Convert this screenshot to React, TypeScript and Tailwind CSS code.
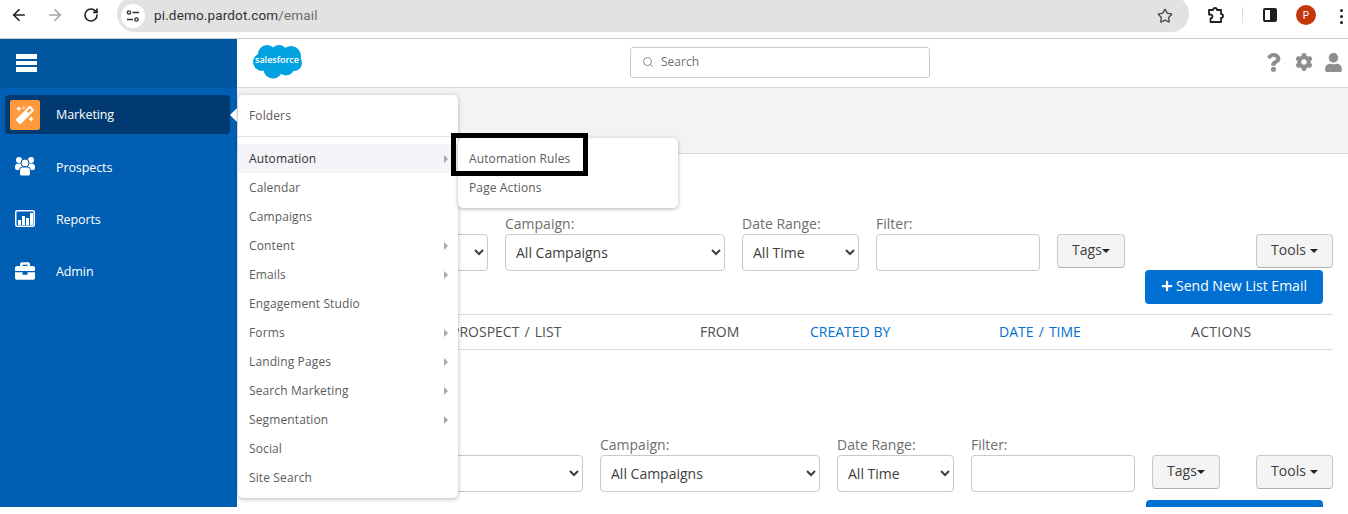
import { ArrowLeft, ArrowRight, RotateCw, Star, Search } from 'lucide-react';
import { FaMagic, FaBriefcase, FaCog, FaUser, FaQuestion, FaPlus } from 'react-icons/fa';

const sans = 'font-["Open_Sans",sans-serif]';

function ReportsIcon() {
  return (
    <svg width="20" height="17" viewBox="0 0 20 17">
      <rect x="0.75" y="0.75" width="18.5" height="15.5" rx="1.5" fill="none" stroke="white" strokeWidth="1.5" />
      <rect x="3" y="10" width="3" height="5" fill="white" />
      <rect x="7" y="6" width="3" height="9" fill="white" />
      <rect x="11" y="8" width="3" height="7" fill="white" />
      <rect x="15" y="3" width="3" height="12" fill="white" />
    </svg>
  );
}

function ProspectsIcon() {
  return (
    <svg width="20" height="19" viewBox="0 0 20 19" fill="white">
      <circle cx="4" cy="3" r="3" />
      <circle cx="16" cy="3" r="3" />
      <path d="M0 9a3 3 0 0 1 3-2.500h14a3 3 0 0 1 3 2.500v2a2 2 0 0 1-2 2H2a2 2 0 0 1-2-2z" />
      <circle cx="10" cy="6" r="4" stroke="#005fb2" strokeWidth="1" />
      <path d="M4.500 13a3 3 0 0 1 3-3h5a3 3 0 0 1 3 3v4a2 2 0 0 1-2 2h-7a2 2 0 0 1-2-2z" stroke="#005fb2" strokeWidth="1" />
    </svg>
  );
}

function Logo() {
  return (
    <svg width="51" height="36" viewBox="0 0 51 36">
      <g fill="#00a1e0">
        <circle cx="15" cy="11" r="9" />
        <circle cx="27" cy="10" r="8" />
        <circle cx="39" cy="13" r="10" />
        <circle cx="10" cy="19" r="9" />
        <circle cx="21" cy="26" r="9.500" />
        <circle cx="34" cy="24" r="8.500" />
        <circle cx="42" cy="20" r="8" />
      </g>
      <text x="25" y="20" textAnchor="middle" fill="white" fontSize="9" fontWeight="600" fontFamily="Open Sans, sans-serif">
        salesforce
      </text>
    </svg>
  );
}

function ChromeBar() {
  return (
    <div className="h-[39px] border-b border-[#c9c9c9] bg-white flex items-start overflow-hidden relative shrink-0">
      <ArrowLeft size={18} strokeWidth={2.2} className="text-[#1f1f1f] ml-[10px] mt-[6px]" />
      <ArrowRight size={18} strokeWidth={2.2} className="text-[#a5a5a5] ml-[18px] mt-[6px]" />
      <RotateCw size={16} strokeWidth={2.4} className="text-[#1f1f1f] ml-[19px] mt-[7px]" />
      <div className="w-[1072px] h-[36px] -mt-[4px] ml-[18px] rounded-r-full rounded-l-full bg-[#e2e2e2] flex items-center">
        <div className="w-[24px] h-[24px] ml-[4px] mt-[4px] rounded-full bg-white flex items-center justify-center">
          <svg width="14" height="12" viewBox="0 0 14 12" fill="none" stroke="#333" strokeWidth="1.4">
            <circle cx="3" cy="2.500" r="1.600" />
            <path d="M6.500 2.500h6.500M1 9.500h6" />
            <circle cx="10.500" cy="9.500" r="1.600" />
          </svg>
        </div>
        <span className='ml-[9px] mt-[2px] text-[13.5px] font-["Roboto",sans-serif] text-[#333] tracking-[0.15px]'>
          pi.demo.pardot.com<span className="text-[#6b6b6b]">/email</span>
        </span>
        <Star size={16} strokeWidth={2} className="text-[#474747] ml-auto mr-[16px] mt-[4px]" />
      </div>
      <svg width="18" height="18" viewBox="0 0 18 18" className="ml-[18px] mt-[6px]" fill="none" stroke="#1f1f1f" strokeWidth="1.800">
        <path d="M2 4h4a2 2 0 0 1 4 0h4v4a2 2 0 0 1 0 4v4H3.500v-3.500a2 2 0 0 0 0-4L2 8.500z" strokeLinejoin="round" />
      </svg>
      <div className="w-px h-[16px] bg-[#f3cfe0] ml-[17px] mt-[7px]" />
      <div className="w-[14px] h-[14px] border-2 border-[#1f1f1f] rounded-[2px] ml-[20px] mt-[8px] flex justify-end">
        <div className="w-[5px] h-full bg-[#1f1f1f]" />
      </div>
      <div className='w-[20px] h-[20px] ml-[19px] mt-[5px] rounded-full bg-[#c5360a] text-white text-[10px] flex items-center justify-center font-["Roboto",sans-serif]'>
        P
      </div>
      <div className="ml-[24px] mt-[9px] flex flex-col gap-[3px]">
        <div className="w-[3px] h-[3px] rounded-full bg-[#1f1f1f]" />
        <div className="w-[3px] h-[3px] rounded-full bg-[#1f1f1f]" />
        <div className="w-[3px] h-[3px] rounded-full bg-[#1f1f1f]" />
      </div>
    </div>
  );
}

function Sidebar() {
  return (
    <div className="w-[237px] shrink-0 bg-[#005fb2] text-white relative">
      <div className="h-[49px] bg-[#00569f] flex flex-col justify-center gap-[2px] pl-[16px] pb-[2px]">
        <div className="w-[21px] h-[5px] bg-white" />
        <div className="w-[21px] h-[4px] bg-white" />
        <div className="w-[21px] h-[5px] bg-white" />
      </div>
      <div className="px-[5px] pt-[7px] flex flex-col gap-[13px]">
        <div className="h-[39px] w-[225px] rounded-[4px] bg-[#003a70] flex items-center pl-[5px] relative">
          <div className="w-[30px] h-[30px] rounded-[2px] bg-[#ff9a3c] flex items-center justify-center">
            <FaMagic size={18} />
          </div>
          <span className="ml-[16px] mt-[2px] text-[12.5px] tracking-[-0.1px]">Marketing</span>
          <div className="absolute -right-[7px] top-[13px] border-y-[7px] border-y-transparent border-r-[7px] border-r-white" />
        </div>
        <NavItem label="Prospects" icon={<ProspectsIcon />} />
        <NavItem label="Reports" icon={<ReportsIcon />} />
        <NavItem label="Admin" icon={<FaBriefcase size={20} />} />
      </div>
    </div>
  );
}

function NavItem({ label, icon }: { label: string; icon: React.ReactNode }) {
  return (
    <div className="h-[39px] flex items-center">
      <div className="w-[40px] flex justify-center">{icon}</div>
      <span className="ml-[11px] mt-[4px] text-[12.5px] tracking-[-0.1px]">{label}</span>
    </div>
  );
}

function MenuRow({ label, arrow, active }: { label: string; arrow?: boolean; active?: boolean }) {
  return (
    <div className={'h-[29px] flex items-center pt-px pl-[11px] pr-[10px] text-[12px] tracking-[0.12px] ' + (active ? 'bg-[#f3f4f7] text-[#333]' : 'text-[#5c5c5c]')}>
      <span>{label}</span>
      {arrow && <div className="ml-auto border-y-[4px] border-y-transparent border-l-[4px] border-l-[#a8a8a8]" />}
    </div>
  );
}

function MainMenu() {
  return (
    <div className="absolute left-[238px] top-[95px] w-[220px] h-[403px] bg-white rounded-[5px] shadow-[0_1px_4px_rgba(0,0,0,0.3)] pt-[6px]">
      <MenuRow label="Folders" />
      <div className="border-b border-[#e3e3e3] mt-[6px] mb-[7px]" />
      <MenuRow label="Automation" arrow active />
      <MenuRow label="Calendar" />
      <MenuRow label="Campaigns" />
      <MenuRow label="Content" arrow />
      <MenuRow label="Emails" arrow />
      <MenuRow label="Engagement Studio" />
      <MenuRow label="Forms" arrow />
      <MenuRow label="Landing Pages" arrow />
      <MenuRow label="Search Marketing" arrow />
      <MenuRow label="Segmentation" arrow />
      <MenuRow label="Social" />
      <MenuRow label="Site Search" />
    </div>
  );
}

function SubMenu() {
  return (
    <>
      <div className="absolute left-[458px] top-[138px] w-[220px] h-[70px] bg-white rounded-[5px] shadow-[0_1px_4px_rgba(0,0,0,0.3)] pt-[6px]">
        <MenuRow label="Automation Rules" />
        <MenuRow label="Page Actions" />
      </div>
      <div className="absolute left-[451px] top-[133px] w-[137px] h-[43px] border-[5px] border-black" />
    </>
  );
}

function Field({ label, width, children }: { label?: string; width: string; children: React.ReactNode }) {
  return (
    <div className={'flex flex-col shrink-0 ' + width}>
      <span className="h-[20px] text-[14px] leading-[20px] text-[#706e6b]">{label}</span>
      {children}
    </div>
  );
}

function Dropdown({ value }: { value: string }) {
  return (
    <select className="h-[37px] w-full rounded-[4px] border border-[#c9c9c9] bg-white pl-[6px] text-[14px] text-[#3e3e3c]" defaultValue={value}>
      <option>{value}</option>
    </select>
  );
}

function ToolButton({ children, className }: { children: React.ReactNode; className?: string }) {
  return (
    <div className={'h-[34px] mt-[20px] pb-[3px] rounded-[4px] border border-[#c9c9c9] border-b-[#b0b0b0] bg-[#f4f4f4] flex items-center justify-center text-[14px] text-[#3e3e3c] ' + (className ?? '')}>
      {children}
    </div>
  );
}

function Caret() {
  return <span className="inline-block mt-[3px] border-x-[4px] border-x-transparent border-t-[4px] border-t-[#222]" />;
}

function FilterRow({ firstWidth }: { firstWidth: string }) {
  return (
    <div className="flex items-start gap-[17px]">
      {/* first filter sits under the open menu, only its right edge shows */}
      <Field width={firstWidth}>
        <Dropdown value="" />
      </Field>
      <Field label="Campaign:" width="w-[220px]">
        <Dropdown value="All Campaigns" />
      </Field>
      <Field label="Date Range:" width="w-[117px]">
        <Dropdown value="All Time" />
      </Field>
      <Field label="Filter:" width="w-[164px]">
        <input className="h-[37px] w-full rounded-[4px] border border-[#c9c9c9] bg-white" />
      </Field>
      <ToolButton className="w-[68px]">
        Tags
        <Caret />
      </ToolButton>
      <ToolButton className="w-[77px] ml-auto gap-[4px]">
        Tools
        <Caret />
      </ToolButton>
    </div>
  );
}

export default function App() {
  return (
    <div className={'h-[507px] overflow-hidden relative flex flex-col bg-white ' + sans}>
      <ChromeBar />
      <div className="flex flex-1 min-h-0">
        <Sidebar />
        <div className="flex-1 min-w-0 flex flex-col">
          <div className="h-[48px] shrink-0 flex items-center pl-[15px] pr-[5px] pb-[2px]">
            <div className="-mt-[3px]">
              <Logo />
            </div>
            <div className="ml-[327px] w-[300px] h-[31px] rounded-[3px] border border-[#c9c9c9] flex items-center pl-[11px] gap-[7px] text-[12px] text-[#706e6b]">
              <Search size={12} className="text-[#8a8a8a]" />
              Search
            </div>
            <div className="ml-auto flex items-center text-[#8e8e8e]">
              <FaQuestion size={19} className="mr-[12px]" />
              <FaCog size={18} className="mr-[11px]" />
              <FaUser size={19} />
            </div>
          </div>
          <div className="h-[67px] shrink-0 bg-[#f3f3f3] border-y border-[#d8d8d8]" />
          <div className="px-[15px] pt-[60px] flex flex-col min-h-0">
            <FilterRow firstWidth="w-[236px]" />
            <div className="h-[34px] w-[178px] mr-[10px] -mt-px shrink-0 self-end pb-[3px] rounded-[4px] bg-[#0070d2] text-white text-[14px] font-medium flex items-center justify-center gap-[3px]">
              <FaPlus size={12} />
              Send New List Email
            </div>
            <div className="mt-[10px] h-[36px] shrink-0 pb-[2px] border-y border-[#dddbda] grid grid-cols-[199px_249px_110px_189px_192px_1fr] items-center text-[14px] text-[#514f4d]">
              <span />
              <span className="[word-spacing:1.5px]">PROSPECT / LIST</span>
              <span>FROM</span>
              <span className="text-[#0070d2]">CREATED BY</span>
              <span className="text-[#0070d2] [word-spacing:1.5px]">DATE / TIME</span>
              <span className="tracking-[0.3px]">ACTIONS</span>
            </div>
            <div className="h-[85px] shrink-0" />
            <FilterRow firstWidth="w-[331px]" />
            <div className="h-[34px] w-[177px] mr-[10px] mt-[8px] shrink-0 self-end rounded-[4px] bg-[#0070d2]" />
          </div>
        </div>
      </div>
      <MainMenu />
      <SubMenu />
    </div>
  );
}
